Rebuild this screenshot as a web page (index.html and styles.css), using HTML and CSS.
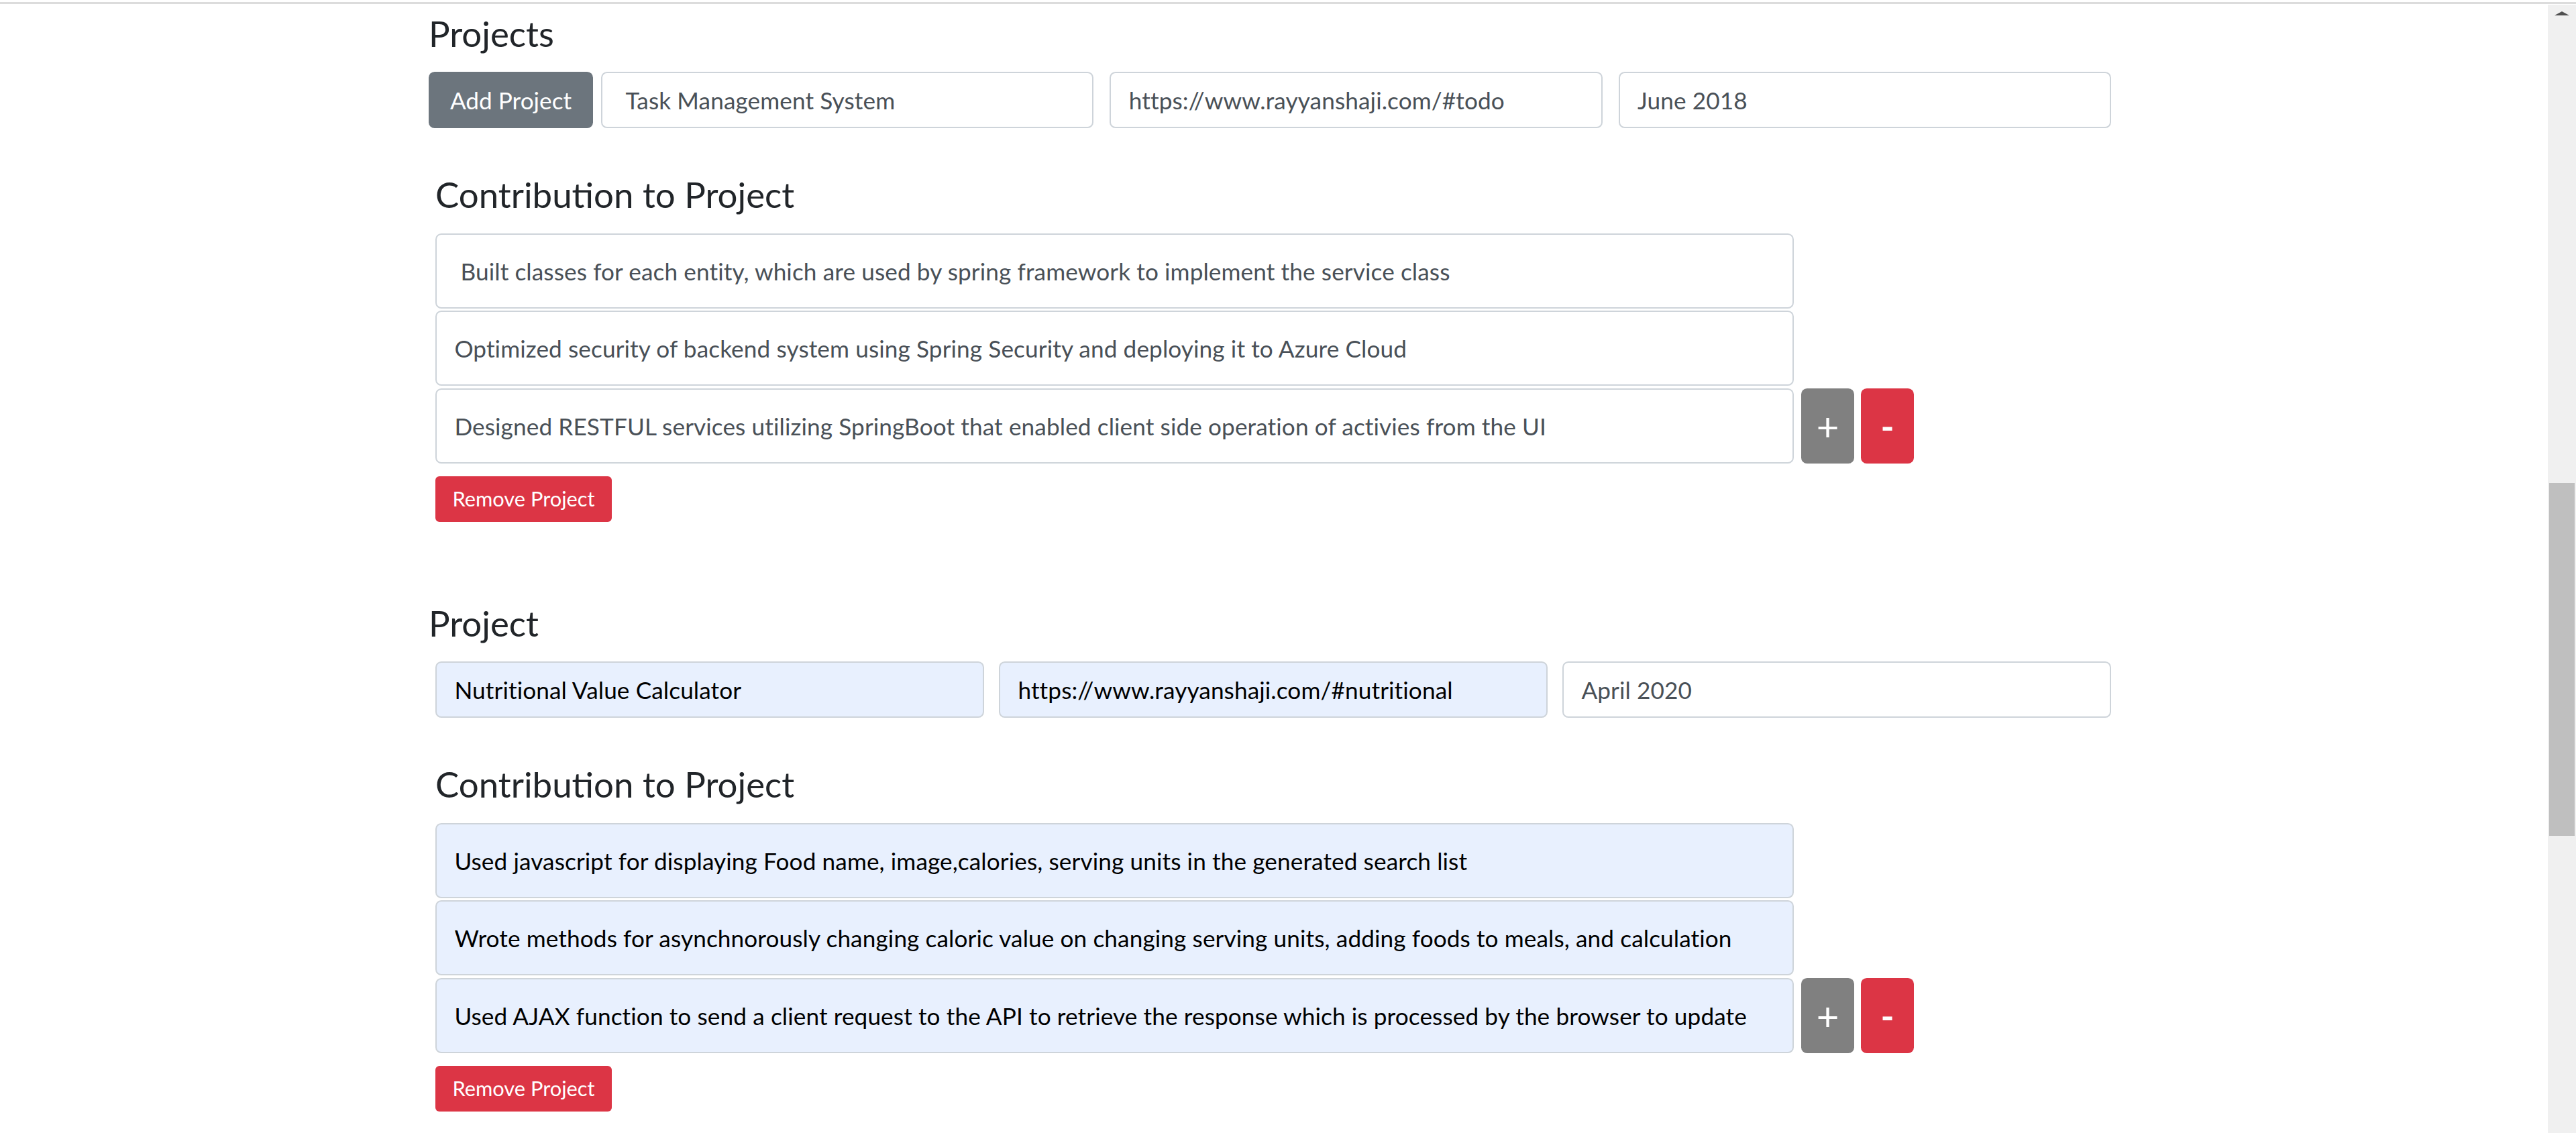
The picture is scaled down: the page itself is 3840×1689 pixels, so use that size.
FILE: index.html
```html
<!DOCTYPE html>
<html lang="en">
<head>
<meta charset="utf-8">
<title>Projects</title>
<link rel="stylesheet" href="styles.css">
</head>
<body>
<div class="page">
  <main class="container">
    <section class="project project-first">
      <h4 class="heading">Projects</h4>
      <div class="row row-first">
        <button class="btn btn-secondary btn-add" type="button">Add Project</button>
        <input class="field" type="text" value=" Task Management System">
        <input class="field" type="text" value="https://www.rayyanshaji.com/#todo">
        <input class="field" type="text" value="June 2018">
      </div>
      <div class="contrib">
        <h4 class="heading">Contribution to Project</h4>
        <div class="contrib-list">
          <input class="field field-tall" type="text" value=" Built classes for each entity, which are used by spring framework to implement the service class">
          <input class="field field-tall" type="text" value="Optimized security of backend system using Spring Security and deploying it to Azure Cloud">
          <div class="contrib-last">
            <input class="field field-tall" type="text" value="Designed RESTFUL services utilizing SpringBoot that enabled client side operation of activies from the UI">
            <button class="btn btn-grey btn-sq" type="button">+</button>
            <button class="btn btn-danger btn-sq btn-minus" type="button">-</button>
          </div>
        </div>
        <button class="btn btn-danger btn-sm" type="button">Remove Project</button>
      </div>
    </section>

    <section class="project project-next">
      <h4 class="heading">Project</h4>
      <div class="row row-next">
        <input class="field field-auto" type="text" value="Nutritional Value Calculator">
        <input class="field field-auto" type="text" value="https://www.rayyanshaji.com/#nutritional">
        <input class="field" type="text" value="April 2020">
      </div>
      <div class="contrib">
        <h4 class="heading">Contribution to Project</h4>
        <div class="contrib-list">
          <input class="field field-tall field-auto" type="text" value="Used javascript for displaying Food name, image,calories, serving units in the generated search list">
          <input class="field field-tall field-auto" type="text" value="Wrote methods for asynchnorously changing caloric value on changing serving units, adding foods to meals, and calculation">
          <div class="contrib-last">
            <input class="field field-tall field-auto" type="text" value="Used AJAX function to send a client request to the API to retrieve the response which is processed by the browser to update">
            <button class="btn btn-grey btn-sq" type="button">+</button>
            <button class="btn btn-danger btn-sq btn-minus" type="button">-</button>
          </div>
        </div>
        <button class="btn btn-danger btn-sm" type="button">Remove Project</button>
      </div>
    </section>
  </main>
</div>
<div class="scrollbar">
  <div class="scroll-arrow"></div>
  <div class="scroll-thumb"></div>
</div>
</body>
</html>
```

FILE: styles.css
```css
html, body {
  margin: 0;
  padding: 0;
  background: #ffffff;
  overflow: hidden;
}

body {
  font-family: Lato, "Open Sans", "Noto Sans", sans-serif;
  color: #212529;
  padding-top: 3px;
}

.page {
  border-top: 3px solid #dcdcdc;
  height: 1683px;
  box-sizing: border-box;
}

.container {
  width: 2508px;
  margin-left: 639px;
  display: flex;
  flex-direction: column;
}

.heading {
  margin: 0;
  font-size: 52.8px;
  font-weight: 400;
  line-height: 1.2;
  color: #212529;
}

.project-first {
  padding-top: 12px;
}

.project-next {
  padding-top: 119px;
}

.row {
  display: flex;
  height: 84px;
  margin-top: 25.6px;
}

.row-first {
  gap: 24px;
}

.row-next {
  margin-left: 10px;
  gap: 22px;
}

.field {
  flex: 1 1 0;
  min-width: 0;
  box-sizing: border-box;
  height: 84px;
  margin: 0;
  padding: 0 26.4px;
  border: 2px solid #ced4da;
  border-radius: 8.8px;
  background: #ffffff;
  color: #495057;
  font-family: inherit;
  font-size: 35.2px;
  letter-spacing: 0.1px;
  line-height: 1.5;
  outline: none;
}

.field-auto {
  background: #e8f0fe;
  color: #000000;
}

.btn {
  box-sizing: border-box;
  margin: 0;
  border: 0;
  color: #ffffff;
  font-family: inherit;
  cursor: pointer;
  display: flex;
  align-items: center;
  justify-content: center;
  padding: 0;
}

.btn-secondary {
  background: #6c757d;
}

.btn-grey {
  background: #808080;
}

.btn-danger {
  background: #dc3545;
}

.btn-add {
  flex: 0 0 245px;
  height: 84px;
  margin-right: -12px;
  border-radius: 8.8px;
  font-size: 35.2px;
}

.contrib {
  margin-left: 10px;
  display: flex;
  flex-direction: column;
  align-items: flex-start;
}

.contrib > .heading {
  margin-top: 67px;
}

.contrib-list {
  margin-top: 26.6px;
  display: flex;
  flex-direction: column;
  gap: 3.5px;
}

.field-tall {
  flex: none;
  width: 2025px;
  height: 112px;
}

.contrib-last {
  display: flex;
  align-items: center;
}

.btn-sq {
  width: 79px;
  height: 112px;
  margin-left: 11px;
  border-radius: 8.8px;
  font-size: 58px;
  font-weight: 400;
}

.btn-minus {
  margin-left: 10px;
  font-size: 54px;
  font-weight: 700;
}

.btn-sm {
  margin-top: 19px;
  width: 263px;
  height: 68px;
  border-radius: 6px;
  font-size: 30.8px;
}

.scrollbar {
  position: fixed;
  top: 7px;
  right: 0;
  bottom: 0;
  width: 42px;
  background: #f0f0f0;
}

.scroll-arrow {
  position: absolute;
  top: 10px;
  left: 10px;
  width: 0;
  height: 0;
  border-left: 11px solid transparent;
  border-right: 11px solid transparent;
  border-bottom: 6px solid #505050;
}

.scroll-thumb {
  position: absolute;
  top: 713px;
  left: 2px;
  width: 38px;
  height: 526px;
  background: #bfbfbf;
}
```
